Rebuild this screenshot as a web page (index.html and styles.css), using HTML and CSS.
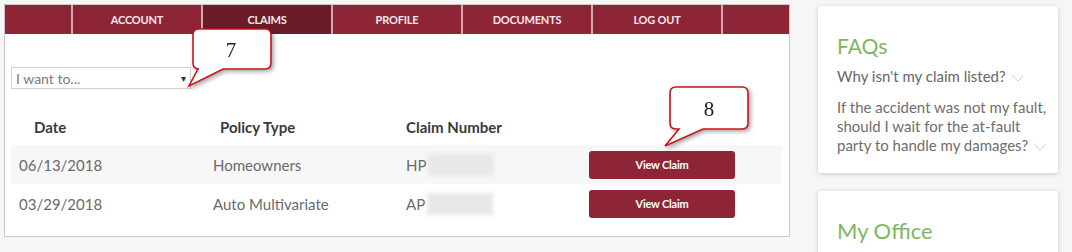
FILE: index.html
```html
<!DOCTYPE html>
<html lang="en">
  <head>
    <meta charset="UTF-8" />
    <meta name="viewport" content="width=device-width, initial-scale=1" />
    <title>My Claims</title>
    <link rel="stylesheet" href="styles.css">
  </head>
  <body>
    <div class="page">
      <main class="panel">
        <nav class="tabs">
          <span class="tab"></span>
          <a href="#" class="tab">ACCOUNT</a>
          <a href="#" class="tab active">CLAIMS</a>
          <a href="#" class="tab">PROFILE</a>
          <a href="#" class="tab">DOCUMENTS</a>
          <a href="#" class="tab">LOG OUT</a>
          <span class="tab"></span>
        </nav>

        <div class="content">
          <div class="picker">
            <span>I want to...</span>
            <span class="arrow">&#9662;</span>
          </div>

          <div class="claims">
            <div class="row head">
              <div class="cell date-head">Date</div>
              <div class="cell policy-head">Policy Type</div>
              <div class="cell">Claim Number</div>
              <div></div>
            </div>
            <div class="row shade">
              <div class="cell">06/13/2018</div>
              <div class="cell">Homeowners</div>
              <div class="cell">HP<span class="masked"></span></div>
              <div><button class="btn">View Claim</button></div>
            </div>
            <div class="row">
              <div class="cell">03/29/2018</div>
              <div class="cell">Auto Multivariate</div>
              <div class="cell">AP<span class="masked"></span></div>
              <div><button class="btn">View Claim</button></div>
            </div>
          </div>
        </div>
      </main>

      <aside class="sidebar">
        <section class="card">
          <h2>FAQs</h2>
          <p class="question">
            Why isn't my claim listed?
            <svg class="chev" width="12" height="7" viewBox="0 0 12 7"><path d="M0.5 0.5 L6 6 L11.5 0.5" /></svg>
          </p>
          <p class="answer">
            If the accident was not my fault, should I wait for the at-fault
            party to handle my damages?
            <svg class="chev" width="12" height="7" viewBox="0 0 12 7"><path d="M0.5 0.5 L6 6 L11.5 0.5" /></svg>
          </p>
        </section>
        <section class="card office">
          <h2>My Office</h2>
        </section>
      </aside>

      <!-- annotation bubbles sit over the page -->
      <svg class="callout callout-7" width="95" height="68" viewBox="0 0 95 68">
        <path d="M14 4 H80 Q86 4 86 10 V38 Q86 44 80 44 H38 L4 61 L13 44 H14 Q8 44 8 38 V10 Q8 4 14 4 Z" />
        <text x="46" y="32">7</text>
      </svg>
      <svg class="callout callout-8" width="95" height="68" viewBox="0 0 95 68">
        <path d="M16 4 H82 Q88 4 88 10 V40 Q88 46 82 46 H43 L5 63 L19 46 H16 Q10 46 10 40 V10 Q10 4 16 4 Z" />
        <text x="49" y="33">8</text>
      </svg>
    </div>
  </body>
</html>
```

FILE: styles.css
```css
* {
  box-sizing: border-box;
}
body {
  margin: 0;
  background: #f6f6f6;
  font-family: Lato, "Open Sans", sans-serif;
}
.page {
  position: relative;
  display: flex;
  align-items: flex-start;
  padding: 4px 0 0 4px;
}
.panel {
  width: 786px;
  height: 233px;
  background: #fff;
  border: 1px solid #c9c9c9;
}
.tabs {
  display: grid;
  grid-template-columns: 66px repeat(5, 130px) 1fr;
  height: 29px;
  background: #8e2537;
}
.tab {
  display: flex;
  align-items: center;
  justify-content: center;
  border-left: 2px solid #d9a6b0;
  color: #f4e8ea;
  font-size: 11px;
  font-weight: 700;
  letter-spacing: -0.2px;
  text-decoration: none;
}
.tab:first-child {
  border-left: none;
}
.tab.active {
  background: #6a1b28;
}
.content {
  padding: 33px 7px 0 6px;
}
.picker {
  display: flex;
  align-items: center;
  justify-content: space-between;
  width: 180px;
  height: 22px;
  padding: 0 4px 0 4px;
  border: 1px solid #d2d2d2;
  color: #7a7a7a;
  font-size: 14px;
}
.picker .arrow {
  color: #333;
  font-size: 10px;
}
.claims {
  margin-top: 20px;
}
.row {
  display: grid;
  grid-template-columns: 194px 193px 191px 1fr;
  align-items: center;
  height: 39px;
  color: #6a6a6a;
  font-size: 15px;
}
.row.shade {
  background: #f7f7f7;
}
.row.head {
  height: 36px;
  color: #3a3a3a;
  font-weight: 700;
}
.cell {
  display: flex;
  align-items: center;
  padding-left: 8px;
}
.date-head {
  padding-left: 23px;
}
.policy-head {
  padding-left: 15px;
}
.masked {
  display: inline-block;
  width: 66px;
  height: 22px;
  margin-left: 2px;
  background: #e8e8e8;
  filter: blur(2px);
}
.btn {
  width: 146px;
  height: 28px;
  border: none;
  border-radius: 3px;
  background: #8e2537;
  color: #fff;
  font-family: inherit;
  font-size: 11px;
  font-weight: 700;
  letter-spacing: -0.2px;
}
.sidebar {
  width: 240px;
  margin-left: 28px;
}
.card {
  margin-top: 2px;
  padding: 27px 0 18px 19px;
  background: #fff;
  border-radius: 2px;
  box-shadow: 0 1px 4px rgb(0 0 0 / 0.2);
}
.card h2 {
  margin: 0;
  color: #7db760;
  font-size: 21px;
  font-weight: 400;
  line-height: 26px;
}
.question {
  margin: 8px 0 0;
  color: #666;
  font-size: 15px;
  line-height: 19px;
}
.answer {
  margin: 12px 0 0;
  color: #6e6e6e;
  font-size: 15px;
  line-height: 19px;
}
.chev {
  margin-left: 2px;
  vertical-align: middle;
  fill: none;
  stroke: #cfcfcf;
  stroke-width: 1;
}
.card.office {
  height: 90px;
  margin-top: 18px;
}
.card.office h2 {
  font-size: 22px;
}
.callout {
  position: absolute;
  z-index: 2;
  filter: drop-shadow(2px 2px 2px rgb(0 0 0 / 0.35));
}
.callout path {
  fill: #fff;
  stroke: #c8161d;
  stroke-width: 1.6;
}
.callout text {
  font-family: "Liberation Serif", serif;
  font-size: 21px;
  text-anchor: middle;
  fill: #222;
}
.callout-7 {
  left: 185px;
  top: 25px;
}
.callout-8 {
  left: 660px;
  top: 83px;
}
```
